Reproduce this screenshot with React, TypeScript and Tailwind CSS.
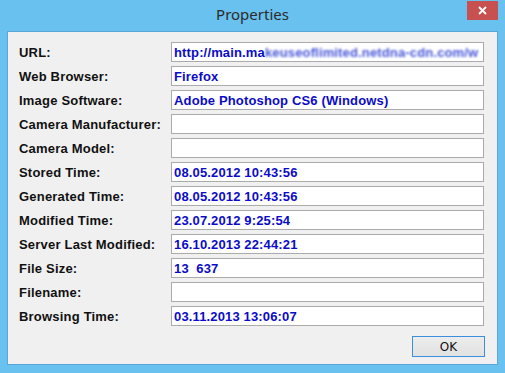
import React from "react";

const rows: [string, string][] = [
  ["URL:", "__URL__"],
  ["Web Browser:", "Firefox"],
  ["Image Software:", "Adobe Photoshop CS6 (Windows)"],
  ["Camera Manufacturer:", ""],
  ["Camera Model:", ""],
  ["Stored Time:", "08.05.2012 10:43:56"],
  ["Generated Time:", "08.05.2012 10:43:56"],
  ["Modified Time:", "23.07.2012 9:25:54"],
  ["Server Last Modified:", "16.10.2013 22:44:21"],
  ["File Size:", "13\u00a0\u00a0637"],
  ["Filename:", ""],
  ["Browsing Time:", "03.11.2013 13:06:07"],
];

export default function App() {
  return (
    <div className="w-[505px] h-[373px] bg-[#69c1ef] flex flex-col overflow-hidden" style={{ fontFamily: '"Liberation Sans", Arial, sans-serif' }}>
      <div className="h-[31px] relative flex items-center justify-center shrink-0">
        <span className="text-[15px] text-[#2b2b2b] leading-none mt-[-2px]" style={{ fontFamily: '"Noto Sans", "Open Sans", sans-serif' }}>Properties</span>
        <div className="absolute right-[7px] top-[1px] w-[31px] h-[19px] bg-[#c75050] flex items-center justify-center">
          <svg width="9" height="9" viewBox="0 0 9 9">
            <path d="M1 1 L8 8 M8 1 L1 8" stroke="#fff" strokeWidth="1.8" />
          </svg>
        </div>
      </div>
      <div className="mx-[7px] h-[334px] border border-[#5aa6da] bg-[#f0f0f0] flex flex-col pt-[10px] pl-[11px] pr-[11px]">
        <div className="flex flex-col gap-[4px]">
          {rows.map(([label, value]) => (
            <div key={label} className="flex items-center h-[20px]">
              <div className="w-[152px] text-[13px] font-bold text-[#111] leading-none tracking-[0.2px]">{label}</div>
              <div className="w-[313px] h-[20px] bg-white border border-[#ababab] flex items-center px-[2px] overflow-hidden whitespace-nowrap">
                {value === "__URL__" ? (
                  <span className="text-[13px] font-bold text-[#0b0bc8] leading-none tracking-[0.15px]">
                    http://main.ma
                    <span className="blur-[1.2px] text-[#4a58d8]">keuseoflimited.netdna-cdn.com/w</span>
                  </span>
                ) : (
                  <span className="text-[13px] font-bold text-[#0b0bc8] leading-none tracking-[0.15px]">{value}</span>
                )}
              </div>
            </div>
          ))}
        </div>
        <div className="flex justify-end mt-[10px] pr-[1px]">
          <div className="w-[73px] h-[21px] border border-[#3c8fe0] bg-gradient-to-b from-[#ececec] to-[#e2e2e2] flex items-center justify-center text-[12px] text-[#111]" style={{ fontFamily: '"DejaVu Sans", sans-serif' }}>
            OK
          </div>
        </div>
      </div>
    </div>
  );
}
